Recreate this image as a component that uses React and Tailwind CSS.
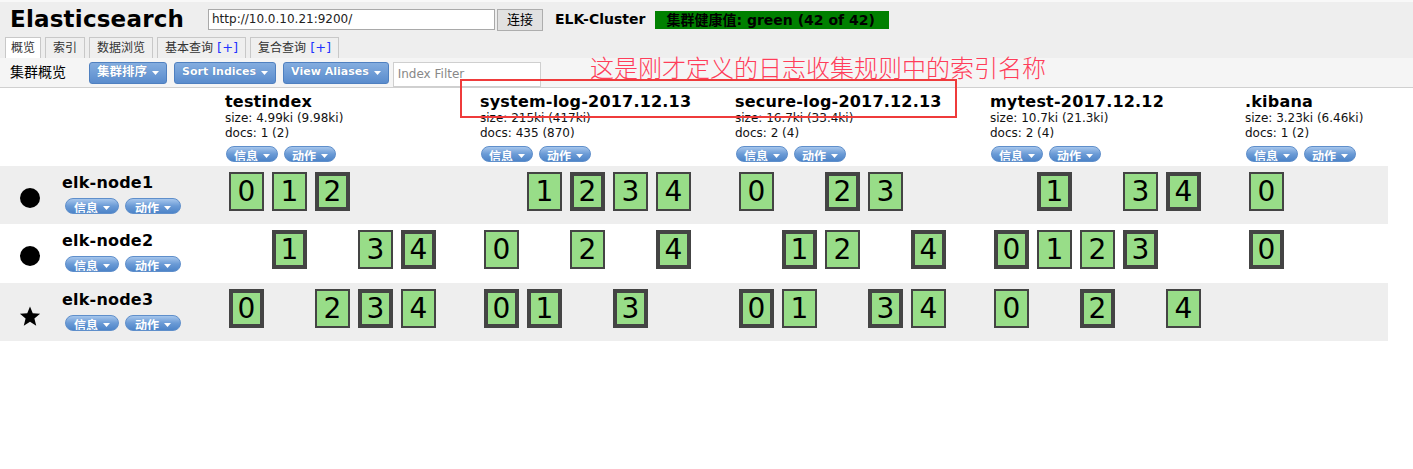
import React from 'react';

const indices = [
  { name: 'testindex', size: 'size: 4.99ki (9.98ki)', docs: 'docs: 1 (2)' },
  { name: 'system-log-2017.12.13', size: 'size: 215ki (417ki)', docs: 'docs: 435 (870)' },
  { name: 'secure-log-2017.12.13', size: 'size: 16.7ki (33.4ki)', docs: 'docs: 2 (4)' },
  { name: 'mytest-2017.12.12', size: 'size: 10.7ki (21.3ki)', docs: 'docs: 2 (4)' },
  { name: '.kibana', size: 'size: 3.23ki (6.46ki)', docs: 'docs: 1 (2)' },
];

// per node, per index: 5 slots -> null | 'r' (replica) | 'p' (primary)
const nodes = [
  {
    name: 'elk-node1',
    master: false,
    shards: [
      ['r', 'r', 'p', null, null],
      [null, 'r', 'p', 'r', 'r'],
      ['r', null, 'p', 'r', null],
      [null, 'p', null, 'r', 'p'],
      ['r'],
    ],
  },
  {
    name: 'elk-node2',
    master: false,
    shards: [
      [null, 'p', null, 'r', 'p'],
      ['r', null, 'r', null, 'p'],
      [null, 'p', 'r', null, 'p'],
      ['p', 'r', 'r', 'p', null],
      ['p'],
    ],
  },
  {
    name: 'elk-node3',
    master: true,
    shards: [
      ['p', null, 'r', 'p', 'r'],
      ['p', 'p', null, 'p', null],
      ['p', 'r', null, 'p', 'r'],
      ['r', null, 'p', null, 'r'],
      [null],
    ],
  },
];

const Caret = () => (
  <svg width="7" height="4" viewBox="0 0 7 4" className="ml-[5px]">
    <path d="M0 0h7L3.5 4z" fill="#fff" />
  </svg>
);

const Pill = ({ label, w }) => (
  <div
    className={`${w} h-[16px] rounded-full border border-[#5f8fcb] bg-linear-to-b from-[#a6c6ec] via-[#6b9bd6] to-[#4d84c8] text-white text-[12px] font-bold leading-[14px] pt-[3px] overflow-hidden flex items-start justify-center`}
  >
    <span>{label}</span>
    <span className="mt-[4px]"><Caret /></span>
  </div>
);

const ToolButton = ({ label, cjk }) => (
  <div
    className={`h-[22px] px-[7px] flex items-center rounded-[3px] border border-[#4f80c0] bg-linear-to-b from-[#84addf] to-[#5a8ccd] text-white font-bold [text-shadow:0_0_1px_#3a6aa8] ${
      cjk ? 'text-[12.5px]' : 'text-[11px]'
    }`}
  >
    {label}
    <Caret />
  </div>
);

const Shard = ({ num, type }) => (
  <div
    className={`w-[35px] h-[39px] bg-[#98dd88] border-[#444] flex items-center justify-center text-[28px] leading-none text-black ${
      type === 'p' ? 'border-[4px]' : 'border-2'
    }`}
  >
    {num}
  </div>
);

const Tab = ({ label, plus, active }) => (
  <div
    className={`h-[21px] border border-b-0 border-[#c8c8c8] text-[12px] leading-[20px] text-[#333] flex items-center ${
      active ? 'bg-white px-[5px]' : 'bg-[#efefef] px-[7px]'
    }`}
  >
    {label}
    {plus && <span className="text-[#2233ff] text-[13px] ml-[4px]">[+]</span>}
  </div>
);

export default function App() {
  return (
    <div className="relative w-[1413px] h-[469px] bg-white overflow-hidden font-['DejaVu_Sans','Noto_Sans_CJK_SC',sans-serif] text-black">
      {/* header */}
      <div className="bg-[#eeeeee] border-t-2 border-[#f8f8f8]">
        <div className="h-[35px] flex items-center pl-[10px]">
          <div className="w-[198px] text-[23px] font-bold leading-none tracking-[0.2px]">Elasticsearch</div>
          <div className="w-[287px] h-[21px] bg-white border border-[#a9a9a9] text-[12px] leading-[19px] pl-[3px] text-[#222]">
            http://10.0.10.21:9200/
          </div>
          <div className="ml-[2px] w-[46px] h-[22px] border border-[#adadad] bg-[#e1e1e1] text-[13px] leading-[20px] text-center">
            连接
          </div>
          <div className="ml-[12px] text-[14px] font-bold">ELK-Cluster</div>
          <div className="ml-[10px] w-[234px] h-[18px] bg-[#008000] text-[14px] font-bold leading-[18px] pl-[11px]">
            集群健康值: green (42 of 42)
          </div>
        </div>
        <div className="flex gap-[4px] pl-[5px]">
          <Tab label="概览" active />
          <Tab label="索引" />
          <Tab label="数据浏览" />
          <Tab label="基本查询" plus />
          <Tab label="复合查询" plus />
        </div>
      </div>
      <div className="h-[30px] bg-[#f5f5f5] border-b border-[#d0d0d0] flex items-center pl-[10px] gap-[7px]">
        <div className="w-[72px] text-[14px]">集群概览</div>
        <ToolButton label="集群排序" cjk />
        <ToolButton label="Sort Indices" />
        <ToolButton label="View Aliases" />
        <div className="-ml-[3px] mt-[4px] w-[148px] h-[25px] bg-white border border-[#cfcfcf] text-[12px] leading-[23px] pl-[4px] text-[#888]">
          Index Filter
        </div>
      </div>

      {/* overview table */}
      <div className="w-[1388px]">
        <div className="h-[78px] flex">
          <div className="w-[220px]" />
          {indices.map((ix, i) => (
            <div key={ix.name} className={`${i === 4 ? 'flex-1' : 'w-[255px]'} pl-[5px] pt-[4px]`}>
              <div className="text-[16px] font-bold leading-[19px] tracking-[0.2px]">{ix.name}</div>
              <div className="text-[12px] leading-[15px] text-[#111]">{ix.size}</div>
              <div className="text-[12px] leading-[15px] text-[#111]">{ix.docs}</div>
              <div className="flex gap-[6px] mt-[5px] pl-[1px]">
                <Pill label="信息" w="w-[52px]" />
                <Pill label="动作" w="w-[52px]" />
              </div>
            </div>
          ))}
        </div>
        {nodes.map((node, r) => (
          <div key={node.name} className={`flex ${r === 1 ? 'h-[59px] bg-white' : 'h-[58px] bg-[#eeeeee]'}`}>
            <div className="w-[220px] flex">
              <div className="w-[60px] flex justify-center pt-[22px]">
                {node.master ? (
                  <svg width="22" height="22" viewBox="0 0 24 24">
                    <path d="M12 1.5l3 7.6 8 .5-6.2 5.2 2 7.9L12 18.3l-6.8 4.4 2-7.9L1 9.6l8-.5z" fill="#000" />
                  </svg>
                ) : (
                  <div className="w-[20px] h-[20px] rounded-full bg-black" />
                )}
              </div>
              <div className="pl-[2px] pt-[8px]">
                <div className="text-[16px] font-bold leading-[18px] tracking-[0.2px]">{node.name}</div>
                <div className="flex gap-[6px] mt-[6px] pl-[3px]">
                  <Pill label="信息" w="w-[54px]" />
                  <Pill label="动作" w="w-[56px]" />
                </div>
              </div>
            </div>
            {node.shards.map((slots, i) => (
              <div key={i} className={`${i === 4 ? 'flex-1' : 'w-[255px]'} flex pl-[9px] pt-[6px]`}>
                {slots.map((s, n) => (
                  <div key={n} className="w-[43px]">
                    {s && <Shard num={n} type={s} />}
                  </div>
                ))}
              </div>
            ))}
          </div>
        ))}
      </div>

      {/* annotation */}
      <div className="absolute left-[590px] top-[54px] text-[24px] leading-[26px] text-[#ff3d5a] font-['Noto_Sans_CJK_SC',sans-serif] font-light">
        这是刚才定义的日志收集规则中的索引名称
      </div>
      <div className="absolute left-[460px] top-[79px] w-[497px] h-[39px] border-2 border-[#ef3b3b]" />
    </div>
  );
}
